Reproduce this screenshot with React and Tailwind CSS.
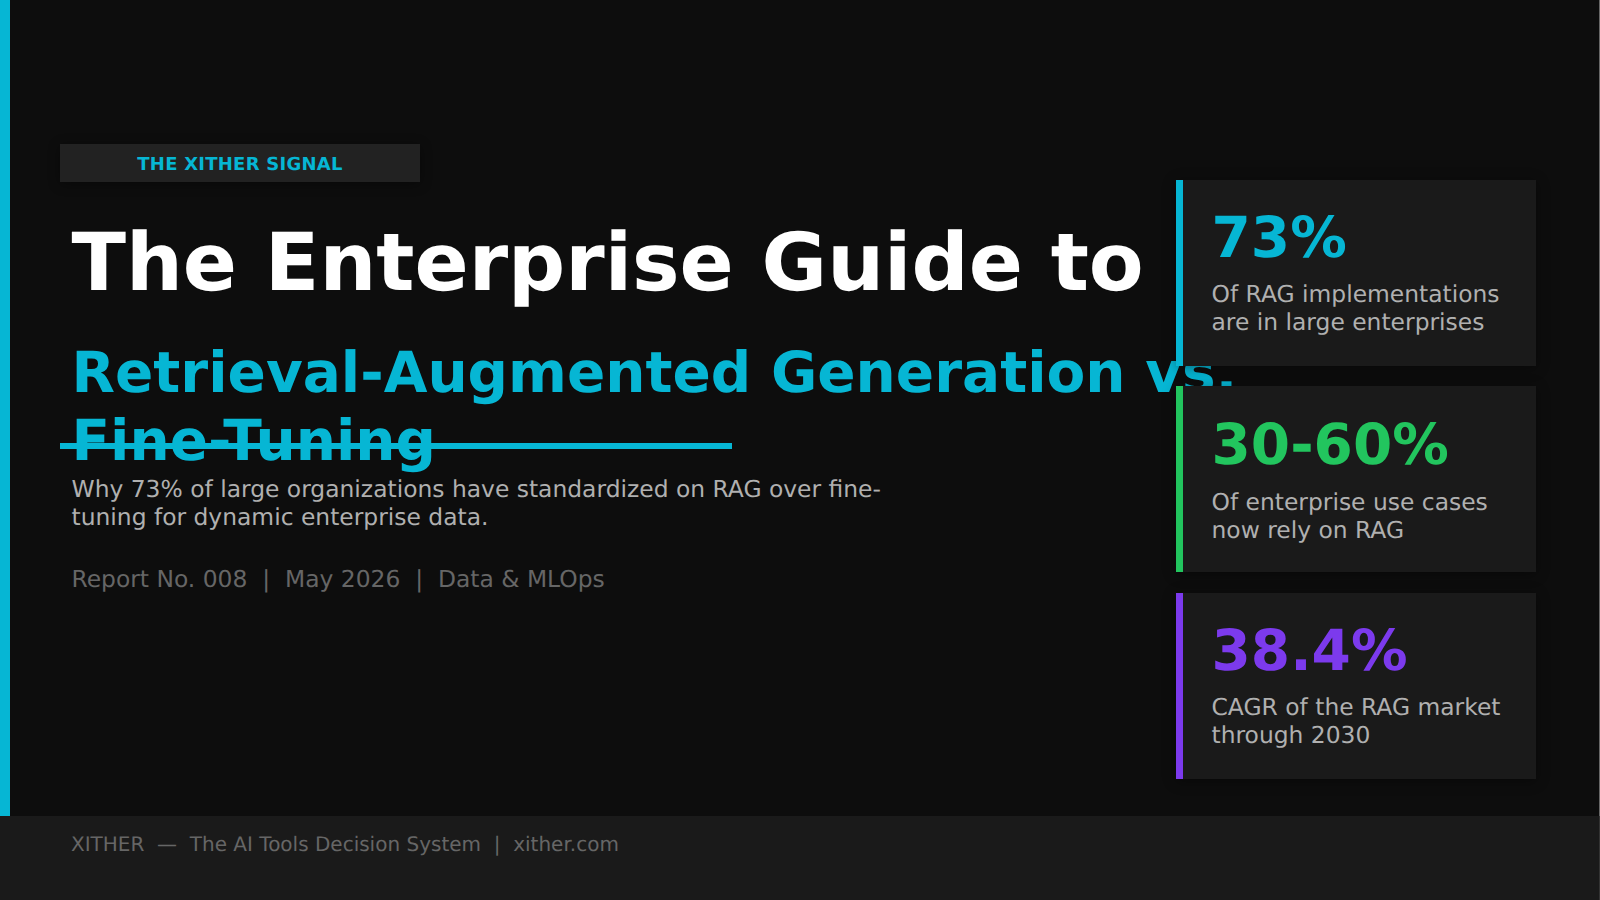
const font = "font-['DejaVu_Sans',sans-serif] [text-rendering:geometricPrecision]";

const stats = [
  { value: '73%', color: 'text-[#06b6d4]', bar: 'bg-[#06b6d4]', top: 'pt-[26px]', gap: 'mt-[8px]', lines: ['Of RAG implementations', 'are in large enterprises'] },
  { value: '30-60%', color: 'text-[#22c55e]', bar: 'bg-[#22c55e]', top: 'pt-[26.5px]', gap: 'mt-[9.5px]', lines: ['Of enterprise use cases', 'now rely on RAG'] },
  { value: '38.4%', color: 'text-[#7c3aed]', bar: 'bg-[#7c3aed]', top: 'pt-[26px]', gap: 'mt-[8px]', lines: ['CAGR of the RAG market', 'through 2030'] },
];

const StatCard = ({ stat }) => (
  <div className="flex h-[186px] w-[360px] bg-[#1a1a1a] shadow-[0_2px_12px_rgba(0,0,0,0.4)]">
    <div className={`w-[7px] shrink-0 ${stat.bar}`} />
    <div className={`pl-[28.5px] ${stat.top}`}>
      <div className={`text-[56.5px] leading-[66px] font-bold ${stat.color}`}>{stat.value}</div>
      <div className={`${stat.gap} text-[23.4px] leading-[28px] text-[#b0b0b0]`}>
        {stat.lines.map((l) => <div key={l}>{l}</div>)}
      </div>
    </div>
  </div>
);

const App = () => {
  return (
    <div className={`flex h-[900px] w-[1600px] flex-col overflow-hidden bg-[#0d0d0d] ${font}`}>
      <div className="flex h-[816px] shrink-0 border-r border-[#666666]">
        <div className="h-full w-[10px] shrink-0 bg-[#06b6d4]" />
        <div className="relative w-[1166px] shrink-0 pl-[50px] pt-[144px]">
          <div className="flex h-[38px] w-[360px] items-center justify-center bg-[#222222] pt-[2px] text-[18px] font-bold tracking-[0.25px] text-[#06b6d4] shadow-[0_2px_12px_rgba(0,0,0,0.4)]">
            THE XITHER SIGNAL
          </div>
          <div className="pl-[11.5px]">
            <h1 className="mt-[32.5px] text-[79.9px] leading-[96px] font-bold whitespace-nowrap text-white">The Enterprise Guide to</h1>
            <h2 className="mt-[29px] w-[1240px] text-[56.5px] leading-[68px] font-bold text-[#06b6d4]">
              Retrieval-Augmented Generation vs. Fine-Tuning
            </h2>
            <p className="-mt-[0.5px] w-[820px] text-[23.4px] leading-[28px] text-[#b0b0b0]">
              Why 73% of large organizations have standardized on RAG over fine-tuning for dynamic enterprise data.
            </p>
            <p className="mt-[34px] text-[23.4px] leading-[28px] whitespace-pre text-[#666666]">Report No. 008  |  May 2026  |  Data &amp; MLOps</p>
          </div>
          <div className="absolute top-[443px] left-[50px] h-[6px] w-[672px] bg-[#06b6d4]" />
        </div>
        <div className="relative flex flex-col gap-[20.25px] pt-[180px]">
          {stats.map((s) => <StatCard key={s.value} stat={s} />)}
        </div>
      </div>
      <div className="flex-1 border-r border-[#333333] bg-[#1a1a1a] pt-[16px] pl-[71px] text-[20px] leading-[24px] whitespace-pre text-[#666666]">
        XITHER  —  The AI Tools Decision System  |  xither.com
      </div>
    </div>
  );
};

export default App;
